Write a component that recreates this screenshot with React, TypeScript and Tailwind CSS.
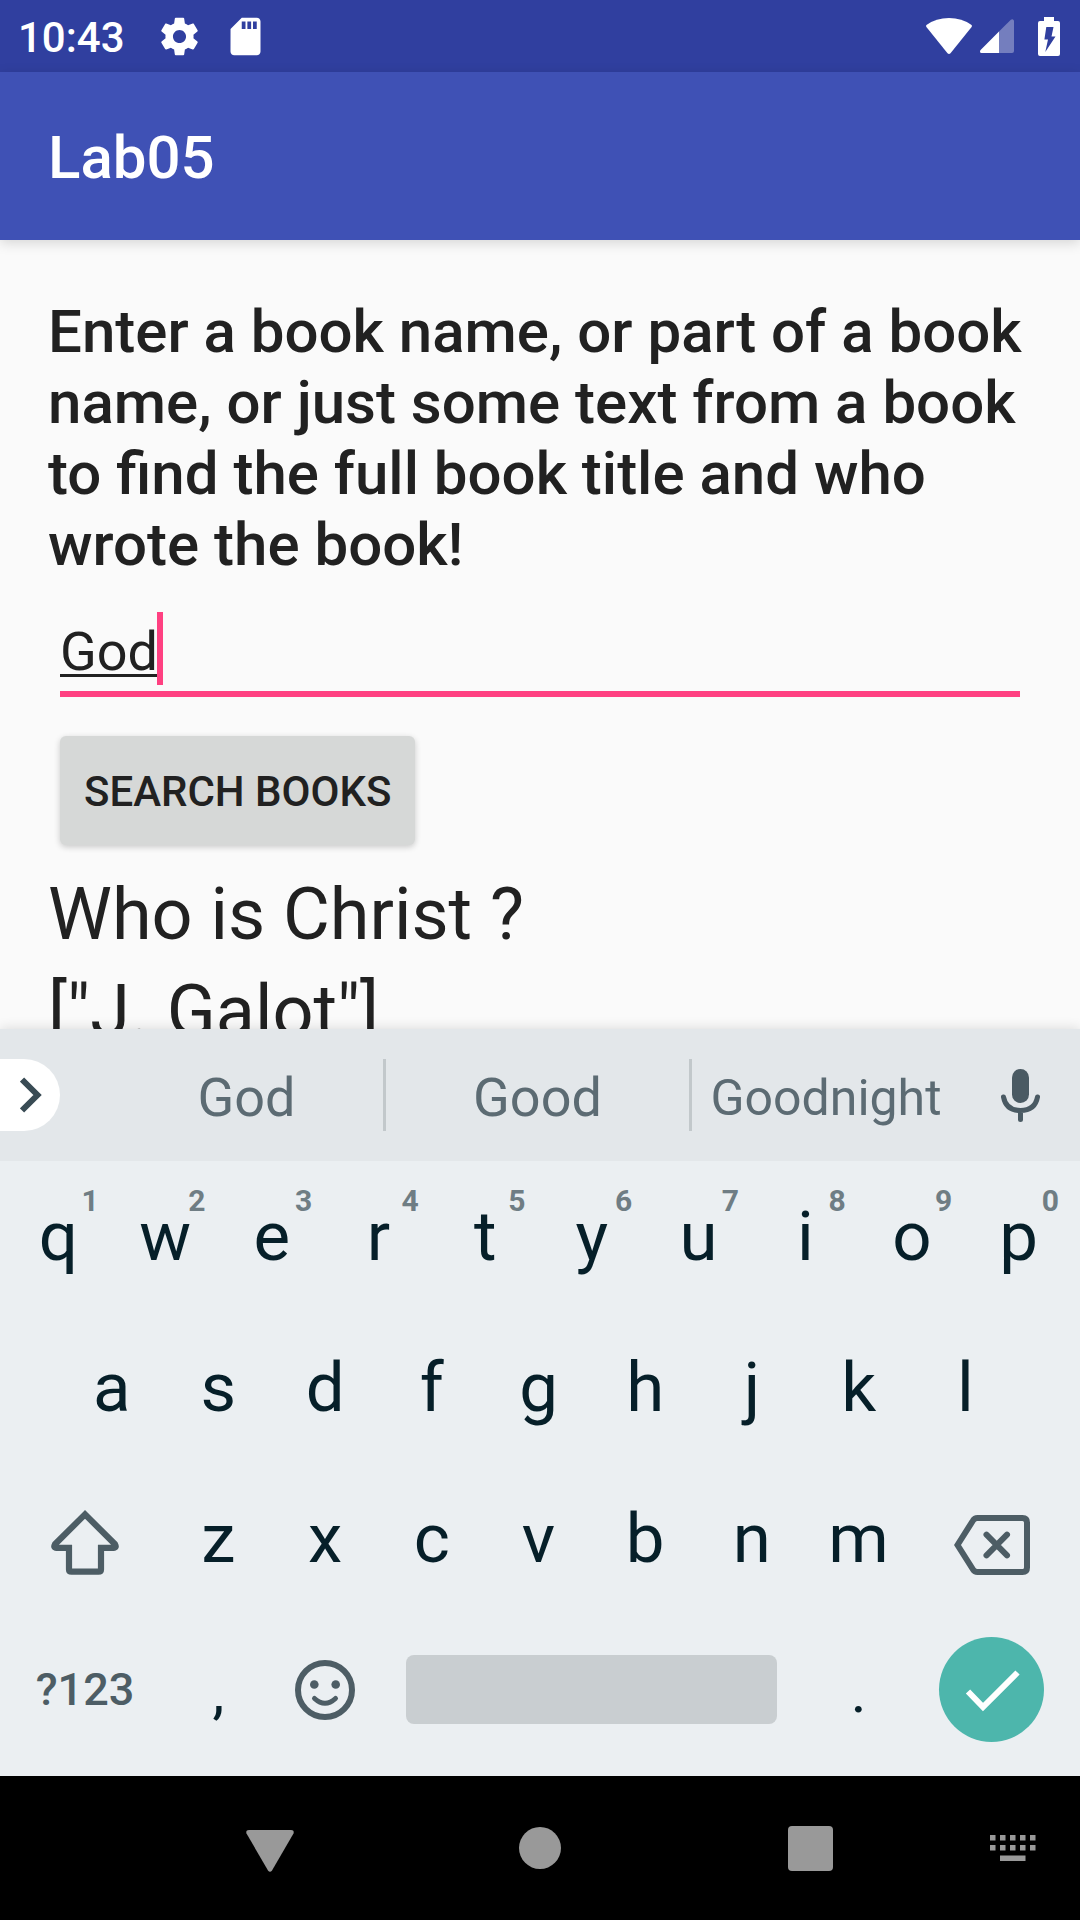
import React, { useState } from 'react';

function StatusBar() {
  return (
    <div className="flex h-[72px] shrink-0 items-center bg-[#303f9f] pr-5 pl-[18px] text-white">
      <span className="pt-1 text-[42px] leading-none font-medium">10:43</span>
      <svg className="ml-8 size-[45px]" viewBox="0 0 24 24" fill="currentColor" aria-hidden="true">
        <path d="M19.43 12.98c.04-.32.07-.64.07-.98s-.03-.66-.07-.98l2.11-1.65c.19-.15.24-.42.12-.64l-2-3.46c-.12-.22-.39-.3-.61-.22l-2.49 1c-.52-.4-1.08-.73-1.69-.98l-.38-2.65C14.46 2.18 14.25 2 14 2h-4c-.25 0-.46.18-.49.42l-.38 2.65c-.61.25-1.17.59-1.69.98l-2.49-1c-.23-.09-.49 0-.61.22l-2 3.46c-.13.22-.07.49.12.64l2.11 1.65c-.04.32-.07.65-.07.98s.03.66.07.98l-2.11 1.65c-.19.15-.24.42-.12.64l2 3.46c.12.22.39.3.61.22l2.49-1c.52.4 1.08.73 1.69.98l.38 2.65c.03.24.24.42.49.42h4c.25 0 .46-.18.49-.42l.38-2.65c.61-.25 1.17-.59 1.69-.98l2.49 1c.23.09.49 0 .61-.22l2-3.46c.12-.22.07-.49-.12-.64l-2.11-1.65zM12 15.5c-1.93 0-3.5-1.57-3.5-3.5s1.57-3.5 3.5-3.5 3.5 1.57 3.5 3.5-1.57 3.5-3.5 3.5z" />
      </svg>
      <svg className="ml-[21px] size-[45px]" viewBox="0 0 24 24" fill="currentColor" aria-hidden="true">
        <path d="M18 2h-8L4.02 8 4 20c0 1.1.9 2 2 2h12c1.1 0 2-.9 2-2V4c0-1.1-.9-2-2-2zm-6 6h-2V4h2v4zm3 0h-2V4h2v4zm3 0h-2V4h2v4z" />
      </svg>
      <svg className="ml-auto h-9 w-[46px]" viewBox="0 0 46 36" fill="currentColor" aria-hidden="true">
        <path d="M.4 9Q-.4 7.800.8 6.800Q10 0 23 0T45.200 6.800Q46.400 7.800 45.600 9L24.500 35.200Q23 36.600 21.500 35.200Z" />
      </svg>
      <svg className="ml-2 h-[34px] w-[34px]" viewBox="0 0 34 34" fill="currentColor" aria-hidden="true">
        <path opacity=".33" d="M19 12.500L30.800.8Q32 0 33 .4Q34 1 34 2V32Q34 34 32 34H19Z" />
        <path d="M19 12.500V34H1.500Q0 34 0 32.500Q0 31.500.6 30.900Z" />
      </svg>
      <svg className="ml-6 h-[39px] w-[22px]" viewBox="0 0 22 39" fill="currentColor" aria-hidden="true">
        <path
          fillRule="evenodd"
          d="M6 0H16V4H20Q22 4 22 6V37Q22 39 20 39H2Q0 39 0 37V6Q0 4 2 4H6ZM8.300 10L6.400 22.400H10L7.300 35L17.500 19.500H13.500L15.500 10Z"
        />
      </svg>
    </div>
  );
}

function ChevronIcon() {
  return (
    <svg className="h-9 w-[22px]" viewBox="0 0 22 36" fill="none" stroke="#394b54" strokeWidth="6" aria-hidden="true">
      <path d="M2 2.500L17.500 18L2 33.500" />
    </svg>
  );
}

function MicIcon() {
  return (
    <svg className="h-[53px] w-[39px]" viewBox="0 0 39 53" aria-hidden="true">
      <rect x="11" y="0" width="17" height="34" rx="8.500" fill="#4a5a63" />
      <path d="M2.500 28Q5 41.500 19.500 41.500T36.500 28M19.500 42V50.500" fill="none" stroke="#4a5a63" strokeWidth="5" strokeLinecap="round" />
    </svg>
  );
}

function ShiftIcon() {
  return (
    <svg className="h-[66px] w-[68px]" viewBox="0 0 68 66" fill="none" stroke="#4d5d65" strokeWidth="6.2" aria-hidden="true">
      <path d="M34 4.400L4 34.200Q2 37.800 5.500 37.800H18V59.500Q18 61.700 20.500 61.700H47.500Q50 61.700 50 59.500V37.800H62.500Q66 37.800 64 34.200Z" />
    </svg>
  );
}

function BackspaceIcon() {
  return (
    <svg className="h-[60px] w-[76px]" viewBox="0 0 76 60" fill="none" stroke="#4d5d65" strokeWidth="6" aria-hidden="true">
      <path d="M3.500 30L19 5.500Q20.500 3 23.500 3H68.500Q73 3 73 7.500V52.500Q73 57 68.500 57H23.500Q20.500 57 19 54.500Z" />
      <path d="M32.500 19.700L53 40.300M53 19.700L32.500 40.300" strokeLinecap="round" />
    </svg>
  );
}

function SmileIcon() {
  return (
    <svg className="size-[60px]" viewBox="0 0 60 60" fill="none" stroke="#4d5d65" aria-hidden="true">
      <circle cx="30" cy="30" r="27" strokeWidth="6" />
      <circle cx="19.300" cy="24.500" r="4.300" fill="#4d5d65" stroke="none" />
      <circle cx="40.700" cy="24.500" r="4.300" fill="#4d5d65" stroke="none" />
      <path d="M19.500 38.500Q30 48 40.500 38.500" strokeWidth="5" strokeLinecap="round" />
    </svg>
  );
}

function LetterKey({ letter, hint }: { letter: string; hint?: string }) {
  return (
    <button type="button" className="relative flex h-full min-w-0 flex-[2] items-center justify-center text-[69px] leading-none">
      {letter}
      {hint && (
        <span className="absolute top-[25px] right-[13px] text-[30px] leading-none font-bold text-[#6f7d84]">{hint}</span>
      )}
    </button>
  );
}

function PunctuationKey({ mark }: { mark: string }) {
  return (
    <button type="button" className="flex h-full items-center justify-center pt-1 text-[60px] leading-none">
      {mark}
    </button>
  );
}

function SideKey({ label, children }: { label: string; children: React.ReactNode }) {
  return (
    <button type="button" aria-label={label} className="flex h-full min-w-0 flex-[3] items-center justify-center">
      {children}
    </button>
  );
}

function Keyboard() {
  const top = 'qwertyuiop'.split('');
  const hints = '1234567890'.split('');
  return (
    <section aria-label="Keyboard" className="relative shrink-0 bg-[#ebeff2] text-[#061f29] shadow-[0_0_12px_rgba(0,0,0,0.14)]">
      <div className="grid h-[132px] grid-cols-[110px_273fr_309fr_268fr_120px] items-center bg-[#e3e7ea] text-[54px] leading-none text-[#5c6b73]">
        <button type="button" aria-label="More" className="flex h-[72px] w-[60px] items-center rounded-r-full bg-white pl-5">
          <ChevronIcon />
        </button>
        <button type="button" className="h-[72px] pt-1.5">God</button>
        <button type="button" className="h-[72px] border-x-[3px] border-[#c2c8cb] pt-1.5">Good</button>
        <button type="button" className="h-[72px] pt-1.5 text-[50px]">Goodnight</button>
        <button type="button" aria-label="Voice input" className="flex justify-center">
          <MicIcon />
        </button>
      </div>
      <div className="pr-2 pb-[11px] pl-[5px]">
        <div className="flex h-[151px]">
          {top.map((l, i) => (
            <LetterKey key={l} letter={l} hint={hints[i]} />
          ))}
        </div>
        <div className="flex h-[151px]">
          <div className="flex-1" />
          {'asdfghjkl'.split('').map((l) => (
            <LetterKey key={l} letter={l} />
          ))}
          <div className="flex-1" />
        </div>
        <div className="flex h-[151px]">
          <SideKey label="Shift">
            <span className="pt-2">
              <ShiftIcon />
            </span>
          </SideKey>
          {'zxcvbnm'.split('').map((l) => (
            <LetterKey key={l} letter={l} />
          ))}
          <SideKey label="Backspace">
            <span className="pt-3">
              <BackspaceIcon />
            </span>
          </SideKey>
        </div>
        <div className="grid h-[151px] grid-cols-[3fr_2fr_2fr_8fr_2fr_3fr] items-center">
          <button type="button" className="text-[45px] leading-none font-medium text-[#4d5d65]">
            ?123
          </button>
          <PunctuationKey mark="," />
          <button type="button" aria-label="Emoji" className="flex h-full items-center justify-center">
            <SmileIcon />
          </button>
          <button type="button" aria-label="Space" className="mx-7 h-[69px] rounded-lg bg-[#c9ced1]" />
          <PunctuationKey mark="." />
          <button type="button" aria-label="Done" className="flex h-full items-center justify-center">
            <span className="flex size-[105px] items-center justify-center rounded-full bg-[#4db6ac]">
              <svg className="size-[105px]" viewBox="0 0 105 105" fill="none" stroke="#fff" strokeWidth="6" aria-hidden="true">
                <path d="M29 54.500L44 70L78.500 35.500" />
              </svg>
            </span>
          </button>
        </div>
      </div>
    </section>
  );
}

function NavigationBar() {
  return (
    <nav className="grid h-[144px] shrink-0 grid-cols-[1fr_2fr_2fr_2fr_1fr] items-center bg-black">
      <span />
      <button type="button" aria-label="Back" className="flex justify-center">
        <svg className="h-12 w-12" viewBox="0 0 48 48" fill="#999" aria-hidden="true">
          <path d="M3 6H45Q48.500 6 47.500 9.500L26 46.500Q24 49 22 46.500L.5 9.500Q-.5 6 3 6Z" />
        </svg>
      </button>
      <button type="button" aria-label="Home" className="flex justify-center">
        <span className="size-[42px] rounded-full bg-[#999]" />
      </button>
      <button type="button" aria-label="Recent apps" className="flex justify-center">
        <span className="size-[45px] rounded-sm bg-[#999]" />
      </button>
      <button type="button" aria-label="Switch keyboard" className="flex justify-center">
        <svg className="h-[26px] w-[46px]" viewBox="0 0 46 26" fill="#999" aria-hidden="true">
          {[0, 10, 20, 30, 40].map((x) => (
            <React.Fragment key={x}>
              <rect x={x} y="0" width="5.500" height="5.500" />
              <rect x={x} y="10" width="5.500" height="5.500" />
            </React.Fragment>
          ))}
          <rect x="10" y="20.500" width="25.500" height="5.500" />
        </svg>
      </button>
    </nav>
  );
}

export default function App() {
  const [query, setQuery] = useState('God');
  return (
    <div className="flex h-screen flex-col overflow-hidden bg-[#fafafa] font-[Roboto,sans-serif] text-[#212121]">
      <StatusBar />
      <header className="relative flex h-[168px] shrink-0 items-center bg-[#3f51b5] px-12 pt-1 shadow-[0_3px_12px_rgba(0,0,0,0.15)]">
        <h1 className="text-[60px] leading-none font-medium text-white">Lab05</h1>
      </header>
      <main className="min-h-0 flex-1 overflow-hidden px-12 pt-14">
        <label htmlFor="book" className="block text-[60px] leading-[71px] font-medium">
          Enter a book name, or part of a book name, or just some text from a book to find the full book title and who
          wrote the book!
        </label>
        <div className="relative mx-3 mt-8 border-b-[6px] border-[#ff4081]">
          <input
            id="book"
            type="text"
            value={query}
            onChange={(e) => setQuery(e.target.value)}
            className="block h-[79px] w-full bg-transparent text-[54px] underline decoration-[3px] underline-offset-4 caret-transparent outline-none"
          />
          <span className="absolute top-0 left-[97px] h-[73px] w-[6px] bg-[#ff4081]" />
        </div>
        <button
          type="button"
          className="mx-3 mt-[39px] block h-[109px] rounded-md bg-[#d6d8d7] px-6 pt-0.5 text-[42px] leading-none font-medium shadow-[0_2px_6px_rgba(0,0,0,0.2)]"
        >
          SEARCH BOOKS
        </button>
        <div className="mt-[21px] text-[72px] leading-[97px]">
          <p>Who is Christ ?</p>
          <p>["J. Galot"]</p>
        </div>
      </main>
      <Keyboard />
      <NavigationBar />
    </div>
  );
}
